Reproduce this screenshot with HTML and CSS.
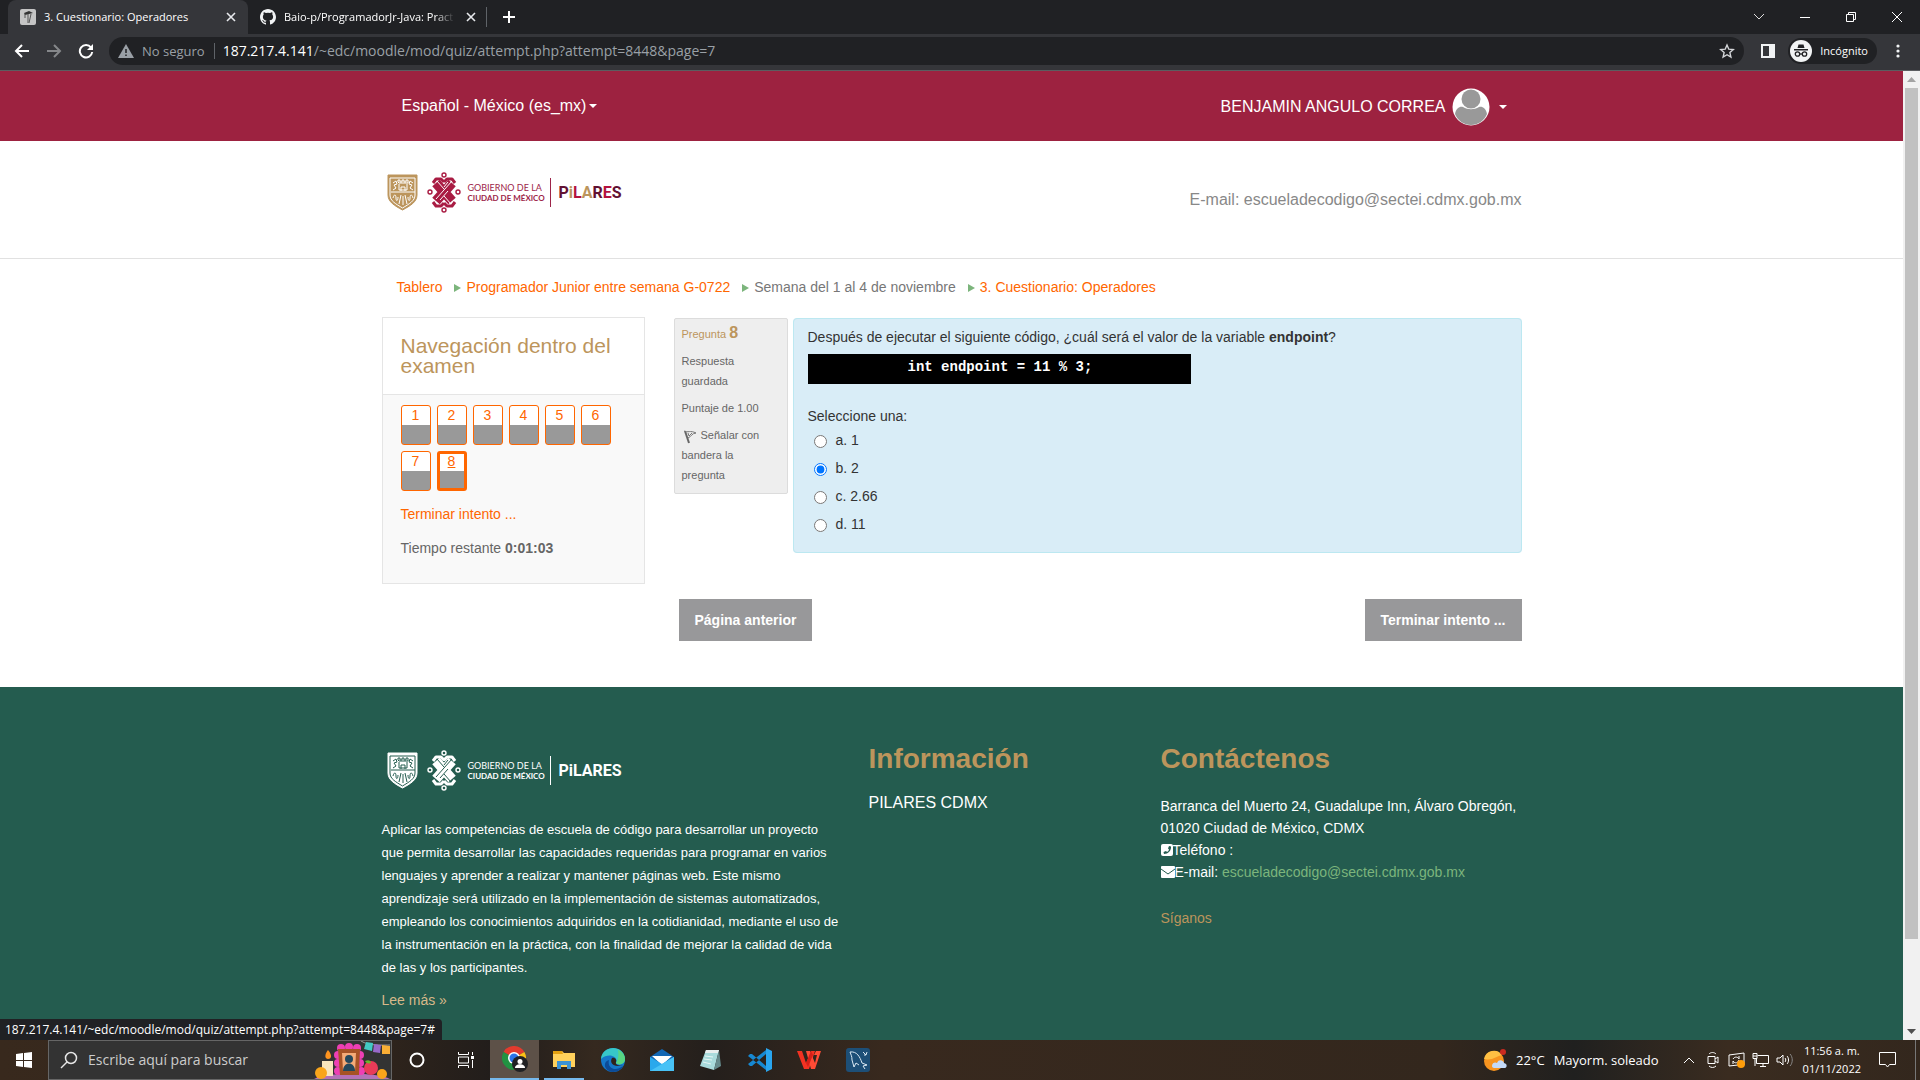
FILE: index.html
```html
<!DOCTYPE html>
<html lang="es-MX">
<head>
<meta charset="utf-8">
<meta name="viewport" content="width=device-width, initial-scale=1">
<title>3. Cuestionario: Operadores</title>
<link rel="stylesheet" href="styles.css">
</head>
<body>
<svg class="defs" width="0" height="0" aria-hidden="true">
  <symbol id="emblems" viewBox="0 0 80 42">
    <g class="shield">
      <path class="fill" d="M2 4h29v20c0 7-7 11-14.500 15C9 35 2 31 2 24z"/>
      <path class="cut" d="M4 7h25v17c0 6-6 9-12.500 13C10 33 4 30 4 24z" fill="none"/>
      <path class="cut" d="M5 21h24M12 11v-2h2v2h2V9h2v2h2V9h2v3h-9zM13 13v6h8v-6M15 20v-4h4v4M7 12l3-2 1 3-3 1 2 3-3 2M27 12l-3-2-1 3 3 1-2 3 3 2M7 27c1-4 3-4 3 0s2 3 2-1M27 27c-1-4-3-4-3 0s-2 3-2-1M15 24l-2 9M19 24l2 9M17 25v9" fill="none"/>
    </g>
    <g class="knot" fill="none">
      <path stroke-width="10" stroke-linejoin="round" d="m50 12 16 18M66 12 50 30"/>
      <path stroke-width="3" stroke-linejoin="round" d="M47 12l3-4h5l3 3M69 12l-3-4h-5l-3 3M47 31l3 4h5l3-3M69 31l-3 4h-5l-3-3"/>
      <path class="gap" d="M66 10 50 28M58 25l7 8M51 10l7 8M62 20l-8 9M58 16l4-5" stroke-width="1"/>
      <circle cx="58" cy="4" r="2" stroke-width="1.400"/><circle cx="58" cy="39" r="2" stroke-width="1.400"/>
      <circle cx="44" cy="21" r="2" stroke-width="1.400"/><circle cx="72" cy="21" r="2" stroke-width="1.400"/>
    </g>
  </symbol>
</svg>

<header class="browser">
  <div class="tabs">
    <div class="tab active">
      <svg width="16" height="16" viewBox="0 0 16 16"><rect width="16" height="16" rx="2" fill="#c4c4c4"/><path d="m4 4 5-2 4 2-4 1-4 1z" fill="#333"/><path d="M5 5v4M8 5v9M11 5 9 14" stroke="#555" fill="none"/></svg>
      <span class="tab-title">3. Cuestionario: Operadores</span>
      <button class="icon-btn" aria-label="Cerrar pestaña"><svg width="10" height="10" viewBox="0 0 10 10"><path d="m1 1 8 8M9 1 1 9" stroke="#e8eaed" stroke-width="1.600"/></svg></button>
    </div>
    <div class="tab">
      <svg width="16" height="16" viewBox="0 0 16 16"><path fill="#f1f3f4" d="M8 0C3.6 0 0 3.6 0 8c0 3.500 2.300 6.500 5.500 7.600.4.100.5-.2.500-.4v-1.500c-2.200.5-2.700-.9-2.700-.9-.4-.9-.9-1.200-.9-1.200-.7-.5.100-.5.100-.5.800.1 1.200.8 1.200.8.700 1.200 1.900.9 2.300.7.100-.5.300-.9.500-1.100-1.800-.2-3.600-.9-3.600-4 0-.9.300-1.600.8-2.100-.1-.2-.4-1 .1-2.100 0 0 .7-.2 2.200.8a7.600 7.600 0 0 1 4 0c1.500-1 2.200-.8 2.200-.8.400 1.100.2 1.900.1 2.100.5.600.8 1.300.8 2.100 0 3.100-1.900 3.700-3.700 3.900.3.300.6.800.6 1.500v2.200c0 .2.100.5.600.4C13.700 14.500 16 11.500 16 8c0-4.400-3.600-8-8-8z"/></svg>
      <span class="tab-title fade">Baio-p/ProgramadorJr-Java: Pract</span>
      <button class="icon-btn" aria-label="Cerrar pestaña"><svg width="10" height="10" viewBox="0 0 10 10"><path d="m1 1 8 8M9 1 1 9" stroke="#e8eaed" stroke-width="1.600"/></svg></button>
    </div>
    <span class="tab-sep"></span>
    <button class="icon-btn new-tab" aria-label="Nueva pestaña"><svg width="14" height="14" viewBox="0 0 14 14"><path d="M7 1v12M1 7h12" stroke="#fff" stroke-width="2"/></svg></button>
    <div class="window-controls">
      <button class="icon-btn" aria-label="Buscar pestañas"><svg width="12" height="8" viewBox="0 0 12 8"><path d="m1 1 5 5 5-5" stroke="#ddd" fill="none"/></svg></button>
      <button class="icon-btn" aria-label="Minimizar"><svg width="12" height="12" viewBox="0 0 12 12"><path d="M1 6.500h10" stroke="#fff"/></svg></button>
      <button class="icon-btn" aria-label="Restaurar"><svg width="12" height="12" viewBox="0 0 12 12"><path d="M1.500 3.500h7v7h-7zM3.500 3V1.500h7v7H9" stroke="#fff" fill="none"/></svg></button>
      <button class="icon-btn" aria-label="Cerrar"><svg width="12" height="12" viewBox="0 0 12 12"><path d="m1 1 10 10M11 1 1 11" stroke="#fff"/></svg></button>
    </div>
  </div>
  <div class="toolbar">
    <button class="icon-btn" aria-label="Atrás"><svg width="16" height="16" viewBox="0 0 16 16"><path d="M15 8H2M8 2 2 8l6 6" stroke="#fff" stroke-width="2" fill="none"/></svg></button>
    <button class="icon-btn" aria-label="Adelante"><svg width="16" height="16" viewBox="0 0 16 16"><path d="M1 8h13M8 2l6 6-6 6" stroke="#85878a" stroke-width="2" fill="none"/></svg></button>
    <button class="icon-btn" aria-label="Recargar"><svg width="16" height="16" viewBox="0 0 16 16"><path d="M13 4.500A6.200 6.200 0 1 0 14.200 9" stroke="#fff" stroke-width="2" fill="none"/><path d="M15 1v6H9z" fill="#fff"/></svg></button>
    <div class="omnibox">
      <svg width="16" height="16" viewBox="0 0 16 16"><path d="M8 1 16 15H0z" fill="#9aa0a6"/><path d="M8 6v4M8 11.500v1.500" stroke="#202124" stroke-width="1.500"/></svg>
      <span class="insecure">No seguro</span>
      <span class="url"><b>187.217.4.141</b>/~edc/moodle/mod/quiz/attempt.php?attempt=8448&amp;page=7</span>
      <svg width="16" height="16" viewBox="0 0 16 16"><path d="m8 2 1.800 4.200 4.500.4-3.400 3 1 4.400L8 11.700 4.100 14l1-4.400-3.400-3 4.500-.4z" stroke="#d5d7da" stroke-width="1.400" fill="none"/></svg>
    </div>
    <button class="icon-btn" aria-label="Panel lateral"><svg width="14" height="14" viewBox="0 0 14 14"><path d="M0 0h14v14H0zM2 2v10h6V2z" fill="#f1f3f4" fill-rule="evenodd"/></svg></button>
    <button class="incognito"><svg width="22" height="22" viewBox="0 0 22 22"><circle cx="11" cy="11" r="11" fill="#f1f3f4"/><path d="M7.500 8 8.500 4.500h5l1 3.500zM4 9h14v1.500H4z" fill="#202124"/><g fill="none" stroke="#202124" stroke-width="1.300"><circle cx="7.500" cy="14" r="2.200"/><circle cx="14.500" cy="14" r="2.200"/><path d="M9.500 14h3"/></g></svg>Incógnito</button>
    <button class="icon-btn" aria-label="Menú"><svg width="4" height="14" viewBox="0 0 4 14" fill="#f1f3f4"><circle cx="2" cy="2" r="1.600"/><circle cx="2" cy="7" r="1.600"/><circle cx="2" cy="12" r="1.600"/></svg></button>
  </div>
</header>

<div class="viewport">
  <div class="page">
    <div class="topbar">
      <div class="container">
        <a class="lang" href="#">Español - México (es_mx)<span class="caret"></span></a>
        <a class="user" href="#">BENJAMIN ANGULO CORREA
          <svg width="38" height="38" viewBox="0 0 38 38"><circle cx="19" cy="19" r="18.500" fill="#fff"/><ellipse cx="19" cy="11" rx="9.500" ry="9.500" fill="#999"/><path d="M3 26c1-6 5-8 8-7 5 3 11 3 16 0 3-1 7 1 8 7-3 7-9 11-16 11S6 33 3 26z" fill="#999"/></svg>
          <span class="caret"></span></a>
      </div>
    </div>
    <div class="masthead">
      <div class="container">
        <a class="logo" href="#" aria-label="Inicio">
          <svg width="80" height="42"><use href="#emblems"/></svg>
          <span class="gov">GOBIERNO DE LA<b>CIUDAD DE MÉXICO</b></span>
          <span class="pilares"><i class="wine">P</i><i class="gold">i</i><i class="red">L</i><i class="gold">A</i><i class="wine">R</i><i class="red">E</i><i class="wine">S</i></span>
        </a>
        <p class="mail">E-mail: escueladecodigo@sectei.cdmx.gob.mx</p>
      </div>
    </div>

    <main class="container content">
      <nav class="crumbs" aria-label="Ruta">
        <a href="#">Tablero</a><span class="arrow"></span><a href="#">Programador Junior entre semana G-0722</a><span class="arrow"></span><span>Semana del 1 al 4 de noviembre</span><span class="arrow"></span><a href="#">3. Cuestionario: Operadores</a>
      </nav>
      <div class="columns">
        <aside class="block">
          <h2>Navegación dentro del examen</h2>
          <div class="block-body">
            <div class="qgrid">
              <a href="#">1</a><a href="#">2</a><a href="#">3</a><a href="#">4</a><a href="#">5</a><a href="#">6</a><a href="#">7</a><a href="#" class="current">8</a>
            </div>
            <a class="finish" href="#">Terminar intento ...</a>
            <p class="timer">Tiempo restante <b>0:01:03</b></p>
          </div>
        </aside>
        <form class="quiz">
          <div class="question">
            <div class="info">
              <h3>Pregunta <b>8</b></h3>
              <p>Respuesta guardada</p>
              <p>Puntaje de 1.00</p>
              <p><svg width="16" height="16" viewBox="0 0 16 16"><path d="m3 3 4 12" fill="none" stroke="#666" stroke-width="2"/><path d="M2 3c4 2 6-1 12 2-4 0-5 4-8 5M6 5l1 3 3-3" fill="none" stroke="#777"/></svg>Señalar con bandera la pregunta</p>
            </div>
            <fieldset class="formulation">
              <p class="qtext">Después de ejecutar el siguiente código, ¿cuál será el valor de la variable <b>endpoint</b>?</p>
              <pre>int endpoint = 11 % 3;</pre>
              <p class="prompt">Seleccione una:</p>
              <label><input type="radio" name="ans">a. 1</label>
              <label><input type="radio" name="ans" checked>b. 2</label>
              <label><input type="radio" name="ans">c. 2.66</label>
              <label><input type="radio" name="ans">d. 11</label>
            </fieldset>
          </div>
          <div class="actions">
            <button type="button">Página anterior</button>
            <button type="button">Terminar intento ...</button>
          </div>
        </form>
      </div>
    </main>

    <footer class="site-footer">
      <div class="container">
        <section class="about">
          <a class="logo light" href="#" aria-label="Inicio">
            <svg width="80" height="42"><use href="#emblems"/></svg>
            <span class="gov">GOBIERNO DE LA<b>CIUDAD DE MÉXICO</b></span>
            <span class="pilares">PiLARES</span>
          </a>
          <p>Aplicar las competencias de escuela de código para desarrollar un proyecto que permita desarrollar las capacidades requeridas para programar en varios lenguajes y aprender a realizar y mantener páginas web. Este mismo aprendizaje será utilizado en la implementación de sistemas automatizados, empleando los conocimientos adquiridos en la cotidianidad, mediante el uso de la instrumentación en la práctica, con la finalidad de mejorar la calidad de vida de las y los participantes.</p>
          <a class="more" href="#">Lee más »</a>
        </section>
        <section>
          <h2>Información</h2>
          <a class="pil" href="#">PILARES CDMX</a>
        </section>
        <section>
          <h2>Contáctenos</h2>
          <address>
            Barranca del Muerto 24, Guadalupe Inn, Álvaro Obregón,<br>01020 Ciudad de México, CDMX<br>
            <svg width="12" height="14" viewBox="0 0 12 14"><rect y="1" width="12" height="12" rx="2" fill="#fff"/><path d="m8 3 2 .5c.5 4-3 7.500-7 7.500L2.500 9 5 8l1 1c1-.5 1.500-1 2-2.500L7 5.500z" fill="#245c4f"/></svg>Teléfono :<br>
            <svg width="14" height="14" viewBox="0 0 14 14"><rect y="1" width="14" height="12" rx="1" fill="#fff"/><path d="m0 4 7 5 7-5" stroke="#245c4f" fill="none"/></svg>E-mail: <a href="#">escueladecodigo@sectei.cdmx.gob.mx</a>
          </address>
          <p class="follow">Síganos</p>
        </section>
      </div>
    </footer>
  </div>
  <div class="scrollbar">
    <svg width="17" height="17" viewBox="0 0 17 17"><path d="m4 11 4.500-5 4.500 5z" fill="#a3a3a3"/></svg>
    <span class="track"><span class="thumb"></span></span>
    <svg width="17" height="17" viewBox="0 0 17 17"><path d="m4 6 4.500 5L13 6z" fill="#505050"/></svg>
  </div>
  <div class="status">187.217.4.141/~edc/moodle/mod/quiz/attempt.php?attempt=8448&amp;page=7#</div>
</div>

<footer class="taskbar">
  <button class="task start" aria-label="Inicio"><svg width="16" height="16" viewBox="0 0 16 16" fill="#fff"><path d="m0 2 7-1v7H0zM8 1l8-1v8H8zM0 9h7v6l-7-1zM8 9h8v7l-8-1z"/></svg></button>
  <label class="search">
    <svg width="18" height="18" viewBox="0 0 18 18"><path d="m1 17 6-6" stroke="#e6e6e6" stroke-width="1.500"/><circle cx="11" cy="7" r="5.500" fill="none" stroke="#e6e6e6" stroke-width="1.500"/></svg>
    <input type="text" placeholder="Escribe aquí para buscar" aria-label="Buscar">
    <svg width="76" height="38" viewBox="0 0 76 38"><path d="M0 38c12-7 64-7 76 0z" fill="#b572b8"/><g fill="#ee3fb4"><circle cx="27" cy="7" r="4"/><circle cx="35" cy="6" r="4"/><circle cx="43" cy="7" r="4"/><circle cx="24" cy="14" r="4"/><circle cx="46" cy="14" r="4"/><circle cx="24" cy="22" r="4"/><circle cx="46" cy="22" r="4"/><circle cx="24" cy="30" r="4"/><circle cx="47" cy="30" r="4"/></g><path d="M24 8h22l-1 26H26z" fill="#a65326"/><path d="M28 12h14l-1 18H29z" fill="#f4ab78"/><circle cx="35" cy="18" r="4" fill="#24485c"/><path d="M29 30c0-10 12-10 12 0z" fill="#24485c"/><path d="M8 20h11v15H8z" fill="#f8e5bd"/><path d="M14 9c5 6 3 9 0 9s-4-4 0-9" fill="#ff941f"/><circle cx="7" cy="32" r="6" fill="#f9a51b"/><circle cx="68" cy="33" r="5" fill="#f9a51b"/><circle cx="57" cy="27" r="7" fill="#e83b58"/><path d="M51 20c4-2 6 0 6 2-3 1-5 0-6-2" fill="#69b82d"/><path d="M47 0c8 5 18 4 31 4" stroke="#999" fill="none"/><path d="m52 1 7 1-1 8-8-2z" fill="#42c9c4"/><path d="m60 3 7 1-1 8-7-1z" fill="#9869c9"/><path d="m68 4 8 1v8h-8z" fill="#f9ae35"/></svg>
  </label>
  <button class="task" aria-label="Cortana"><svg width="16" height="16" viewBox="0 0 16 16"><circle cx="8" cy="8" r="6.500" stroke="#fff" stroke-width="2" fill="none"/></svg></button>
  <button class="task" aria-label="Vista de tareas"><svg width="18" height="16" viewBox="0 0 18 16"><path d="M1.500 0v2.500h10V0M1.500 16v-2.500h10V16M1.500 5h10v6h-10zM15.500 0v3M15.500 8v8" stroke="#fff" fill="none"/><path d="M14 4h3v3h-3z" fill="#fff"/></svg></button>
  <button class="task on" aria-label="Chrome"><svg width="26" height="26" viewBox="0 0 26 26"><path d="M12 12 1.600 6A12 12 0 0 1 22.400 6z" fill="#e33b2e"/><path d="M12 12 22.400 6A12 12 0 0 1 12 24z" fill="#fbc116"/><path d="M12 12v12A12 12 0 0 1 1.600 6z" fill="#229342"/><circle cx="12" cy="12" r="6" fill="#fff"/><circle cx="12" cy="12" r="4.500" fill="#2a74e8"/><circle cx="18" cy="18" r="8" fill="#202124"/><circle cx="18" cy="15.500" r="2.500" fill="#fff"/><path d="M13 22c0-5 10-5 10 0z" fill="#fff"/></svg></button>
  <button class="task open" aria-label="Explorador"><svg width="22" height="20" viewBox="0 0 22 20"><path d="M0 1h9l2 2h11v14H0z" fill="#ffd15c"/><path d="M0 1h9l1 3H0z" fill="#e3a112"/><path d="M4 19v-8h14v8h-4v-4H8v4z" fill="#3b92d4"/></svg></button>
  <button class="task" aria-label="Edge"><svg width="24" height="24" viewBox="0 0 24 24"><circle cx="12" cy="12" r="12" fill="#1577c9"/><path d="M0 11C1-3 23-4 24 11c0 5-6 7-9 4 3-6-7-11-15-4z" fill="#37c7c8"/><path d="M17 2c5 2 7 6 7 9 0 5-6 7-9 4 2-3 3-8 2-13z" fill="#58d582"/><path d="M8 12c-2 8 6 12 14 6-3 6-10 7-14 5-6-3-5-10 0-11z" fill="#0c4b97"/><path d="M11 10c-3 5 2 10 11 7-4 1-8 0-7-3 1-2-1-5-4-4z" fill="#30231b"/></svg></button>
  <button class="task" aria-label="Correo"><svg width="24" height="22" viewBox="0 0 24 22"><path d="m0 8 12-8 12 8v14H0z" fill="#1267b5"/><path d="M2 7h20l-10 9z" fill="#fff"/><path d="m0 8 12 7 12-7v14H0z" fill="#2aa8ec"/><path d="m0 22 24-14v14z" fill="#48c2f6"/></svg></button>
  <button class="task" aria-label="Bloc de notas"><svg width="24" height="22" viewBox="0 0 24 22"><path d="M7 1h13l-5 20-14-4z" fill="#a9dbdc"/><path d="M20 1l2 16-7 4z" fill="#668b8d"/><path d="M7 1h13l-1 3H6z" fill="#e8eeee"/><path d="m6 7 8 1M5 10l8 1M4 13l8 2" stroke="#e6f6f5"/></svg></button>
  <button class="task" aria-label="Code"><svg width="24" height="24" viewBox="0 0 24 24"><path d="m0 8 2-2 2 0 14 12v4zM0 16l2 2h2L18 6V2z" fill="#1688d2"/><path d="m18 0 6 3v18l-6 3z" fill="#29a5ef"/></svg></button>
  <button class="task" aria-label="WPS"><svg width="24" height="20" viewBox="0 0 24 20"><path d="M0 1h5l4 12 5-12h4l-6 18H7z" fill="#f23222"/><path d="M9 1h4l5 12 2-8h-3l2-4h5l-6 18h-4z" fill="#ff4b35"/><path d="m14 1-5 12 2 4 5-12z" fill="#d61f18"/></svg></button>
  <button class="task" aria-label="Workbench"><svg width="24" height="24" viewBox="0 0 24 24"><rect width="24" height="24" rx="3" fill="#1d4f77"/><path d="M4 4c7-1 10 5 12 11l5 2-4 1 2 3M4 4c1 3 2 4 2 8l2 7 2-4 3 2M17 4l3 3 1-3M20 7h-2" stroke="#dceaf4" fill="none"/></svg></button>
  <div class="tray">
    <button class="weather"><svg width="24" height="24" viewBox="0 0 24 24"><circle cx="11" cy="13" r="10" fill="#f7941f"/><path d="M1 11a10 10 0 0 1 18-4c-5 1-10 6-18 4z" fill="#ffc043"/><circle cx="20" cy="4" r="3" fill="#c92a20"/><path d="M9 18c0-4 4-4 5-3 2-5 7-2 7 0 4 1 3 5 0 5H11c-1 0-2-1-2-2z" fill="#c4daf8"/></svg><span>22°C</span><span>Mayorm. soleado</span></button>
    <button class="tray-btn" aria-label="Mostrar iconos ocultos"><svg width="12" height="8" viewBox="0 0 12 8"><path d="m1 7 5-5 5 5" stroke="#fff" fill="none"/></svg></button>
    <button class="tray-btn" aria-label="Reunirse ahora"><svg width="12" height="16" viewBox="0 0 12 16"><path d="M1 4.500h7v7H1zM8 7l3-2v6L8 9M2 2c2-2 5-2 7 0M2 14c2 2 5 2 7 0" stroke="#fff" fill="none"/></svg></button>
    <button class="tray-btn" aria-label="Actualización"><svg width="18" height="16" viewBox="0 0 18 16"><path d="m1 3 15-2v12M1 3v11l9-1M5 7c2-3 5-2 6 0V4M11 8c-1 3-4 4-6 1v3" stroke="#fff" fill="none"/><circle cx="13" cy="12" r="4" fill="#ff9d0a"/></svg></button>
    <button class="tray-btn" aria-label="Red"><svg width="17" height="14" viewBox="0 0 17 14"><path d="M5.500 2.500h11v8H4.500V6M1 .5h4v5H1zM1 3h4M3 5v8M8 13.500h6M11 11v2" stroke="#fff" fill="none"/></svg></button>
    <button class="tray-btn" aria-label="Volumen"><svg width="17" height="14" viewBox="0 0 17 14"><path d="M1 5h3l3-3v10L4 9H1zM9 5c1 1 1 3 0 4M11 3c2 2 2 6 0 8" stroke="#fff" fill="none"/><path d="M14 1c3 3 3 9 0 12" stroke="#888" fill="none"/></svg></button>
    <div class="clock"><span>11:56 a. m.</span><span>01/11/2022</span></div>
    <button aria-label="Notificaciones"><svg width="17" height="16" viewBox="0 0 17 16"><path d="M.5.500h16v12h-6l-2 2.500-2-2.500h-6z" stroke="#fff" fill="none"/></svg></button>
    <span class="peek"></span>
  </div>
</footer>
</body>
</html>
```
FILE: styles.css
```css
* { box-sizing: border-box; }
body {
  margin: 0;
  min-height: 100vh;
  display: flex;
  flex-direction: column;
  font: 14px/20px "Liberation Sans", Arial, sans-serif;
  color: #666;
  background: #fff;
}
h2, h3, p, pre, fieldset, address { margin: 0; padding: 0; border: 0; font-style: normal; }
button { font: inherit; border: 0; padding: 0; background: none; color: inherit; }
a { color: #ff6600; text-decoration: none; }
svg { flex: none; display: block; }
.defs { position: absolute; }
.icon-btn { display: grid; place-items: center; width: 16px; flex: none; }

/* Browser frame */
.browser { background: #35363a; border-bottom: 1px solid #5b5d60; color: #fff; font: 12px/16px "Open Sans", sans-serif; }
.tabs { height: 34px; background: #202124; display: flex; align-items: center; padding-left: 8px; }
.tab { width: 240px; height: 34px; display: flex; align-items: center; gap: 8px; padding: 0 9px 0 12px; }
.tab.active { background: #35363a; border-radius: 8px 8px 0 0; }
.tab-title { flex: 1; white-space: nowrap; overflow: hidden; font-size: 11px; }
.fade { -webkit-mask-image: linear-gradient(90deg, #000 88%, transparent); mask-image: linear-gradient(90deg, #000 88%, transparent); }
.tab-sep { width: 1px; height: 20px; background: #5f6368; margin-left: -2px; }
.new-tab { margin-left: 14px; }
.window-controls { margin-left: auto; display: flex; gap: 30px; padding-right: 15px; height: 28px; }
.toolbar { height: 36px; display: flex; align-items: center; padding: 0 14px 2px; gap: 16px; }
.omnibox { flex: 1; height: 28px; margin-left: -1px; padding: 0 9px; border-radius: 14px; background: #202124; display: flex; align-items: center; gap: 8px; font-size: 13px; color: #9aa0a6; }
.insecure { padding-right: 9px; border-right: 1px solid #5f6368; }
.url { flex: 1; font-size: 14px; }
.url b { font-weight: 400; color: #fff; }
.incognito { height: 26px; display: flex; align-items: center; gap: 8px; padding: 0 9px 0 2px; margin: 0 -3px 0 -4px; border-radius: 13px; background: #202124; font-size: 11px; }

/* Page and scrollbar */
.viewport { flex: 1; display: flex; position: relative; }
.page { flex: 1; display: flex; flex-direction: column; }
.scrollbar { width: 17px; background: #f1f1f1; display: flex; flex-direction: column; }
.track { flex: 1; padding: 0 2px; }
.thumb { display: block; height: 91%; background: #c1c1c1; }
.status { position: absolute; left: 0; bottom: 0; height: 21px; padding: 0 7px 0 5px; border-radius: 0 4px 0 0; background: #202124; color: #fff; font: 12px/22px "Open Sans", sans-serif; }
.container { width: 100%; max-width: 1170px; margin: 0 auto; padding: 0 15px; }

.topbar { background: #9d2240; font-size: 16px; }
.topbar .container { display: flex; justify-content: space-between; align-items: center; height: 70px; padding: 0 30px 0 35px; }
.topbar a { color: #fff; display: flex; align-items: center; }
.user { gap: 6px; padding-top: 1px; }
.caret { border: 4px solid transparent; border-top-color: #fff; border-bottom: 0; margin-left: 3px; }

.masthead { border-bottom: 1px solid #e1e1e1; }
.masthead .container { display: flex; justify-content: space-between; align-items: flex-start; height: 117px; padding-top: 30px; }
.mail { font-size: 16px; color: #888; padding-top: 19px; }
.logo { display: flex; align-items: center; padding-left: 4px; color: #9d2449; --shield: #bc955c; --knot: #a91c43; --back: #fff; }
.logo.light { color: #fff; --shield: #fff; --knot: #fff; --back: #245c4f; }
.shield .fill { fill: var(--shield); stroke: var(--shield); }
.shield .cut { stroke: var(--back); stroke-width: 1; }
.knot { stroke: var(--knot); }
.knot .gap { stroke: var(--back); }
.gov { display: grid; width: 85px; height: 29px; padding: 5px 0 4px 2px; border-right: 1px solid currentColor; font: 9px/10px Lato, sans-serif; white-space: nowrap; }
.gov b { font-size: 8px; }
.pilares { font: 700 16px/29px Roboto, sans-serif; padding-left: 8px; }
.pilares i { font-style: normal; }
.wine { color: #621132; }
.gold { color: #bc955c; }
.red { color: #b3123f; }

/* Quiz */
.content { padding-bottom: 46px; }
.crumbs { display: flex; align-items: center; padding: 18px 15px 20px; color: #777; }
.arrow { border: 4px solid transparent; border-left: 7px solid #7cb57c; border-right: 0; margin: 2px 5px 0 12px; }
.columns { display: flex; align-items: flex-start; gap: 29px; }
.block { width: 263px; flex: none; border: 1px solid #e5e5e5; background: #f9f9f9; }
.block h2 { background: #fff; border-bottom: 1px solid #e5e5e5; padding: 18px; font: 21px/20px "Liberation Sans", Arial, sans-serif; color: #bc955c; }
.block-body { padding: 10px 18px 25px; }
.qgrid { display: flex; flex-wrap: wrap; gap: 6px; }
.qgrid a { width: 30px; height: 40px; border: 1px solid #ff6600; border-radius: 3px; text-align: center; line-height: 18px; background: linear-gradient(#fff 19px, #999 19px); }
.qgrid .current { border-width: 3px; line-height: 14px; text-decoration: underline; background: linear-gradient(#fff 17px, #999 17px); }
.finish { display: block; padding: 13px 0 14px; }
.quiz { flex: 1; }
.question { display: flex; align-items: flex-start; gap: 5px; padding-top: 1px; }
.info { width: 114px; flex: none; height: 176px; border: 1px solid #dcdcdc; border-radius: 2px; background: #eee; padding: 4px 7px; font-size: 11px; }
.info h3 { font: 11px/20px "Liberation Sans", Arial, sans-serif; color: #bc955c; }
.info h3 b { font-size: 16px; }
.info p { margin-top: 7px; }
.info svg { display: inline-block; vertical-align: -5px; margin-right: 3px; }
.formulation { flex: 1; min-height: 235px; border: 1px solid #bce8f1; border-radius: 4px; background: #d9edf7; padding: 8px 14px 12px; color: #333; }
pre { width: 383px; height: 30px; margin: 7px 0 22px; padding-left: 100px; background: #000; color: #fff; font: bold 14px/26px "Liberation Mono", monospace; }
.formulation label { display: flex; align-items: center; gap: 9px; height: 28px; }
input[type="radio"] { width: 13px; height: 13px; margin: 2px 0 0 6px; }
.actions { display: flex; justify-content: space-between; padding: 46px 0 0 5px; }
.actions button { height: 42px; padding: 0 16px; background: #98989a; color: #fff; font-weight: 700; }

/* Site footer */
.site-footer { flex: 1; background: #245c4f; color: #fff; }
.site-footer .container { display: grid; grid-template-columns: 458px 263px 1fr; column-gap: 29px; padding-top: 62px; }
.about p { font-size: 13px; line-height: 23px; padding-top: 27px; }
.about .more { display: block; color: #d8b98a; padding-top: 11px; }
.site-footer h2 { font: bold 28px/20px "Liberation Sans", Arial, sans-serif; color: #bc955c; }
.pil { display: block; color: #fff; font-size: 16px; padding-top: 24px; }
address { line-height: 22px; padding-top: 26px; white-space: nowrap; }
address svg { display: inline-block; vertical-align: -2px; }
address a { color: #7cb57c; }
.follow { color: #bc955c; padding-top: 25px; }

/* Taskbar */
.taskbar { height: 40px; display: flex; align-items: center; background: linear-gradient(90deg, #38291d, #33261c 18%, #211d1b 26%, #35291f 31%, #241f1c 37%, #38291e 46%, #33271d 75%, #20201f 82%, #3a2c20 90%, #33271d); color: #fff; font: 14px/20px "Open Sans", sans-serif; }
.task { width: 49px; height: 40px; display: grid; place-items: center; }
.task.start { width: 48px; }
.task.on { background: #5d5148; border-bottom: 2px solid #76b9ed; }
.task.open { background: linear-gradient(#76b9ed, #76b9ed) center bottom / 40px 2px no-repeat; }
.search { width: 344px; height: 40px; display: flex; align-items: center; padding: 0 1px 0 11px; gap: 10px; background: #333; border: 1px solid #666; }
.search input { flex: 1; min-width: 0; border: 0; padding: 0; background: none; font: inherit; color: #ccc; }
.search input::placeholder { color: #ccc; }
.tray { margin-left: auto; display: flex; align-items: center; height: 40px; }
.weather { display: flex; align-items: center; gap: 9px; margin-right: 18px; font-size: 13px; }
.tray-btn { width: 24px; height: 40px; display: grid; place-items: center; }
.clock { display: grid; font-size: 11px; line-height: 18px; text-align: center; margin: 0 18px 0 6px; }
.peek { width: 1px; height: 40px; background: #777; margin: 0 4px 0 19px; }
```
